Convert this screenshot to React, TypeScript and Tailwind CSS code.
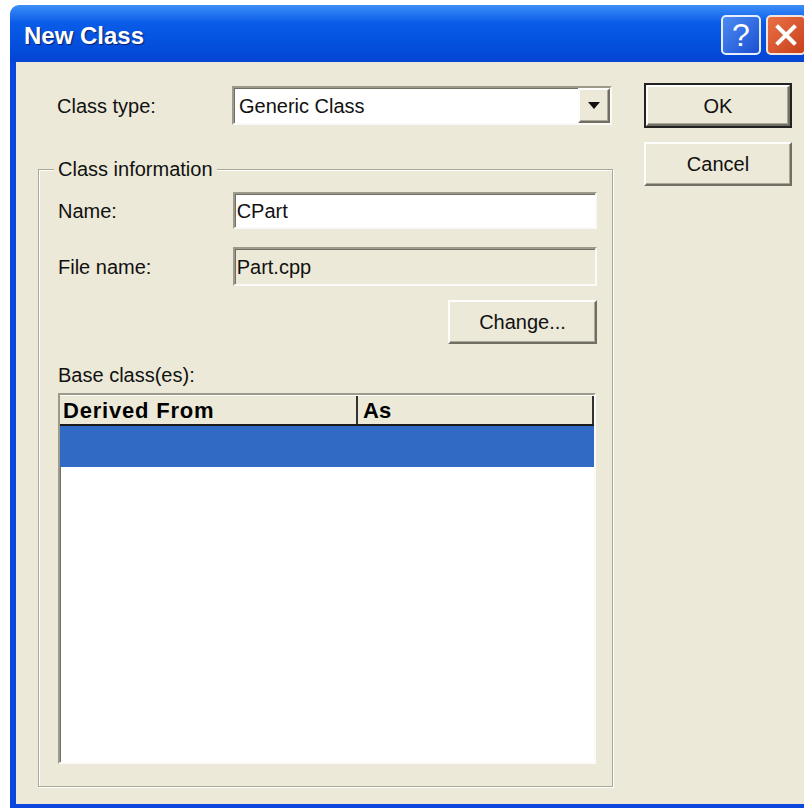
import React from 'react';

// 3D edge styles shared by the classic controls
const sunken =
  'border-2 border-t-[#9d9a8c] border-l-[#9d9a8c] border-r-[#fbfaf6] border-b-[#fbfaf6] shadow-[inset_1px_1px_0_#716f64]';
const raised =
  'border-2 border-t-[#fdfdfb] border-l-[#fdfdfb] border-r-[#716f64] border-b-[#716f64] shadow-[inset_-1px_-1px_0_#aca899]';

function Button({ label, isDefault }: { label: string; isDefault?: boolean }) {
  const face = (
    <div className={`flex-1 flex items-center justify-center bg-[#ece9d8] ${raised}`}>
      <span className="text-[20px] text-[#111]">{label}</span>
    </div>
  );
  if (isDefault) {
    return <div className="flex h-[45px] border-2 border-[#222]">{face}</div>;
  }
  return <div className="flex h-[44px]">{face}</div>;
}

function Field({ value, disabled, className }: { value: string; disabled?: boolean; className?: string }) {
  return (
    <div
      className={`flex items-center pl-[2px] ${sunken} ${disabled ? 'bg-[#ece9d8]' : 'bg-white'} ${className ?? ''}`}
    >
      <span className="text-[20px] text-[#111]">{value}</span>
    </div>
  );
}

function TitleBar() {
  return (
    <div className="flex items-center h-[57px] pl-[14px] pr-[4px] rounded-tl-[9px] bg-gradient-to-b from-[#3d8ef8] via-[#0a5de9] via-30% to-[#0344d4]">
      <span className="pt-[4px] text-[24px] font-bold text-white [text-shadow:1px_1px_1px_#0a1f6b]">
        New Class
      </span>
      <div className="ml-auto flex gap-[5px] pt-[2px]">
        <div className="w-[40px] h-[40px] rounded-[5px] border-2 border-[#e6eefc] bg-gradient-to-br from-[#4f8bf3] to-[#1b4fd0] flex items-center justify-center">
          <span className="text-[32px] leading-none text-white">?</span>
        </div>
        <div className="w-[40px] h-[40px] rounded-[5px] border-2 border-[#f3e4dc] bg-gradient-to-br from-[#ea7046] to-[#c8401a] flex items-center justify-center">
          <svg width="24" height="24" viewBox="0 0 24 24">
            <path d="M4 4 L20 20 M20 4 L4 20" stroke="#fff" strokeWidth="4" strokeLinecap="square" />
          </svg>
        </div>
      </div>
    </div>
  );
}

export default function App() {
  return (
    <div className="w-[804px] h-[808px] overflow-hidden bg-white pt-[5px] pl-[10px] font-['Liberation_Sans',Arial,sans-serif]">
      <div className="flex flex-col w-[800px] h-full">
        <TitleBar />

        <div className="flex-1 flex bg-[#ece9d8] border-l-[6px] border-b-[4px] border-[#0b47dc] pt-[21px]">
          {/* left column: type picker and class information group */}
          <div className="ml-[22px] w-[575px] flex flex-col pt-[3px]">
            <div className="flex items-center h-[39px]">
              <span className="w-[194px] pl-[19px] text-[20px] text-[#111]">Class type:</span>
              <div className={`flex items-center w-[380px] h-[39px] bg-white ${sunken}`}>
                <span className="flex-1 pl-[5px] text-[20px] text-[#111]">Generic Class</span>
                <div className={`flex items-center justify-center w-[32px] h-full bg-[#ece9d8] ${raised}`}>
                  <svg width="12" height="7" viewBox="0 0 12 7">
                    <path d="M0 0 H12 L6 7 Z" fill="#111" />
                  </svg>
                </div>
              </div>
            </div>

            <div className="relative mt-[44px] flex-1 mb-[17px] border border-[#aca899] shadow-[inset_1px_1px_0_#fff,1px_1px_0_#fff] pt-[22px] pl-[19px] pr-[15px] pb-[22px] flex flex-col">
              <span className="absolute left-[15px] top-[-13px] px-[4px] bg-[#ece9d8] text-[20px] leading-[24px] text-[#111]">
                Class information
              </span>

              <div className="flex items-center">
                <span className="w-[175px] text-[20px] text-[#111]">Name:</span>
                <Field value="CPart" className="w-[365px] h-[37px]" />
              </div>

              <div className="flex items-center mt-[18px]">
                <span className="w-[175px] text-[20px] text-[#111]">File name:</span>
                <Field value="Part.cpp" disabled className="w-[365px] h-[39px]" />
              </div>

              <div className="flex justify-end mt-[14px]">
                <div className="w-[149px]">
                  <Button label="Change..." />
                </div>
              </div>

              <span className="mt-[19px] text-[20px] leading-[24px] text-[#111]">Base class(es):</span>

              {/* base class list */}
              <div className={`mt-[6px] w-[538px] flex-1 bg-white flex flex-col ${sunken}`}>
                <div className="flex h-[31px] bg-[#ece9d8] border-t border-t-white border-b-2 border-b-[#1a1a1a]">
                  <div className="w-[298px] border-r-2 border-r-[#333] pl-[3px] flex items-center">
                    <span className="text-[22px] font-bold tracking-[0.8px] text-black">Derived From</span>
                  </div>
                  <div className="flex-1 border-r-2 border-r-[#333] pl-[5px] flex items-center">
                    <span className="text-[22px] font-bold text-black">As</span>
                  </div>
                </div>
                <div className="h-[41px] bg-[#316ac5]" />
              </div>
            </div>
          </div>

          {/* right column: dialog buttons */}
          <div className="ml-[31px] w-[148px] flex flex-col gap-[14px]">
            <Button label="OK" isDefault />
            <Button label="Cancel" />
          </div>
        </div>
      </div>
    </div>
  );
}
